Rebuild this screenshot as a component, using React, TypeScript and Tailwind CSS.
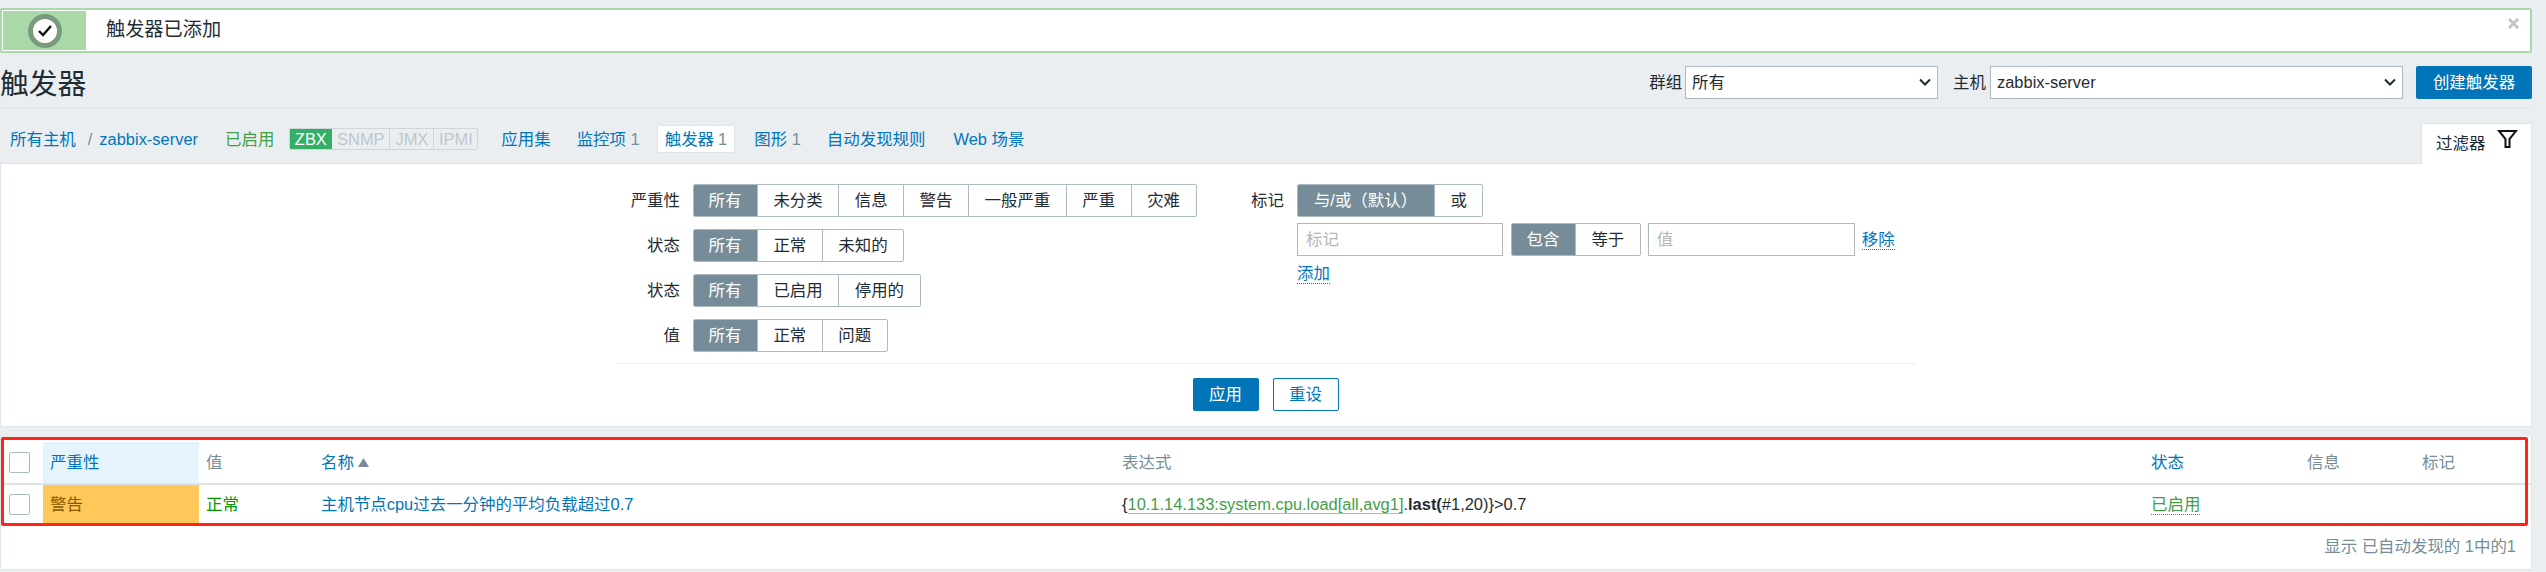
const fontStack = "font-['Liberation_Sans','Noto_Sans_CJK_SC',sans-serif]";

function Segmented({ options, first }: { options: string[]; first?: string }) {
  return (
    <div className="flex h-[33px] w-fit rounded-[2px] border border-[#acbbc2] overflow-hidden">
      {options.map((label, index) => (
        <div
          key={label}
          className={
            index === 0
              ? `flex items-center justify-center -ml-px -my-px px-[15.5px] bg-[#768d99] text-white ${first ?? ''}`
              : 'flex items-center justify-center px-[15.5px] border-l border-[#acbbc2]'
          }
        >
          {label}
        </div>
      ))}
    </div>
  );
}

function FilterRow({ label, options }: { label: string; options: string[] }) {
  return (
    <div className="flex items-center h-[33px]">
      <div className="w-[64px] mr-[13px] text-right">{label}</div>
      <Segmented options={options} />
    </div>
  );
}

function Chevron() {
  return (
    <svg className="absolute right-[7px] top-[12px] pointer-events-none" width="12" height="9" viewBox="0 0 12 9" fill="none">
      <path d="M1 1.5l5 5 5-5" stroke="#1f2c33" strokeWidth="2" />
    </svg>
  );
}

function HostSelect({ value, width }: { value: string; width: string }) {
  return (
    <div className={`relative h-[33px] ${width}`}>
      <select className="appearance-none w-full h-full bg-white border border-[#acbbc2] pl-[6px] outline-none">
        <option>{value}</option>
      </select>
      <Chevron />
    </div>
  );
}

export default function App() {
  return (
    <div className={`${fontStack} w-full h-[572px] overflow-hidden bg-[#ebeef0] text-[16.44px] text-[#1f2c33] pr-[14px] pt-2`}>
      {/* メッセージ */}
      <div className="relative flex h-[45px] bg-white border-2 border-[#a9d8a9] rounded-[2px] p-px">
        <div className="flex items-center justify-center w-[83px] bg-[#a9d8a9]">
          <div className="flex items-center justify-center w-[34px] h-[34px] rounded-full bg-white border-[5px] border-[#7a9a7c]">
            <svg width="16" height="14" viewBox="0 0 16 14" fill="none">
              <path d="M2 7l4 4 8-9" stroke="#111" strokeWidth="2.4" />
            </svg>
          </div>
        </div>
        <div className="flex items-center pl-[20px] text-[19.2px]">触发器已添加</div>
        <svg className="absolute right-[11px] top-[8px]" width="11" height="11" viewBox="0 0 11 11" fill="none">
          <path d="M1 1l9 9M10 1l-9 9" stroke="#bcc8ce" strokeWidth="3" />
        </svg>
      </div>

      {/* ヘッダー */}
      <div className="flex items-center justify-between h-[56px] border-b border-[#dfe4e7]">
        <h1 className="text-[28.8px] font-normal leading-none mt-[8px]">触发器</h1>
        <div className="flex items-center mt-[4px]">
          <span className="mr-[3px]">群组</span>
          <HostSelect value="所有" width="w-[253px]" />
          <span className="ml-[15px] mr-[4px]">主机</span>
          <HostSelect value="zabbix-server" width="w-[413px]" />
          <button className="ml-[13px] w-[116px] h-[33px] rounded-[2px] bg-[#0275b8] text-white">创建触发器</button>
        </div>
      </div>

      {/* ナビ */}
      <div className="flex items-end justify-between h-[54px]">
        <div className="flex items-center h-[28px] mb-[10px] pl-[10px] text-[#0275b8]">
          <span>所有主机</span>
          <span className="ml-[12px] text-[#768d99]">/</span>
          <span className="ml-[7px]">zabbix-server</span>
          <span className="ml-[27px] text-[#429e47]">已启用</span>
          <div className="flex h-[22px] ml-[15px] rounded-[2px] border border-[#cfd6da] overflow-hidden text-[#bcc7cd] leading-[20px]">
            <span className="-my-px -ml-px w-[43px] text-center leading-[22px] bg-[#34af67] text-white">ZBX</span>
            <span className="w-[57px] text-center">SNMP</span>
            <span className="w-[44px] text-center border-l border-[#cfd6da]">JMX</span>
            <span className="w-[44px] text-center border-l border-[#cfd6da]">IPMI</span>
          </div>
          <span className="ml-[23px]">应用集</span>
          <span className="ml-[26px]">监控项 <span className="text-[#768d99]">1</span></span>
          <span className="ml-[17px] flex items-center h-[28px] pl-[7px] pr-[7px] bg-white border border-[#dfe4e7] rounded-[2px]">触发器 <span className="ml-1 text-[#768d99]">1</span></span>
          <span className="ml-[19px]">图形 <span className="text-[#768d99]">1</span></span>
          <span className="ml-[26px]">自动发现规则</span>
          <span className="ml-[28px]">Web 场景</span>
        </div>
        <div className="flex items-start justify-between w-[111px] h-[41px] -mb-px pl-[14px] pr-[13px] pt-[5px] bg-white rounded-t-[2px] border-t border-x border-[#dfe4e7] z-10">
          <span className="mt-[2px]">过滤器</span>
          <svg width="21" height="20" viewBox="0 0 21 20" fill="none">
            <path d="M2 2h17l-6.500 8v8h-4v-8z" stroke="#111" strokeWidth="2" />
          </svg>
        </div>
      </div>

      {/* フィルター */}
      <div className="h-[264px] bg-white border border-[#dfe4e7] pt-[20px]">
        <div className="w-[1300px] mx-auto">
          <div className="flex h-[180px] border-b border-[#ebeef0]">
            <div className="w-[635px] flex flex-col gap-[12px]">
              <FilterRow label="严重性" options={['所有', '未分类', '信息', '警告', '一般严重', '严重', '灾难']} />
              <FilterRow label="状态" options={['所有', '正常', '未知的']} />
              <FilterRow label="状态" options={['所有', '已启用', '停用的']} />
              <FilterRow label="值" options={['所有', '正常', '问题']} />
            </div>
            <div className="flex items-start">
              <div className="w-[34px] mr-[12px] leading-[33px]">标记</div>
              <div>
                <Segmented options={['与/或（默认）', '或']} first="w-[137px]" />
                <div className="flex items-center mt-[6px] h-[33px]">
                  <input placeholder="标记" className="w-[206px] h-[33px] border border-[#acbbc2] px-[8px] placeholder:text-[#b5b5b5] outline-none" />
                  <div className="ml-[8px]">
                    <Segmented options={['包含', '等于']} />
                  </div>
                  <input placeholder="值" className="ml-[7px] w-[207px] h-[33px] border border-[#acbbc2] px-[8px] placeholder:text-[#b5b5b5] outline-none" />
                  <span className="ml-[7px] text-[#0275b8] border-b border-dotted border-[#0275b8] leading-[20px]">移除</span>
                </div>
                <span className="inline-block mt-[7px] text-[#0275b8] border-b border-dotted border-[#0275b8] leading-[20px]">添加</span>
              </div>
            </div>
          </div>
          <div className="flex justify-center gap-[14px] mt-[14px] pr-px">
            <button className="w-[66px] h-[33px] rounded-[2px] bg-[#0275b8] text-white">应用</button>
            <button className="w-[66px] h-[33px] rounded-[2px] bg-white border border-[#0275b8] text-[#0275b8]">重设</button>
          </div>
        </div>
      </div>

      {/* テーブル */}
      <div className="relative mt-[10px] h-[133px] bg-white border-x border-b border-[#dfe4e7] pt-[5px]">
        <table className="w-full table-fixed">
          <colgroup>
            <col className="w-[42px]" />
            <col className="w-[156px]" />
            <col className="w-[115px]" />
            <col className="w-[801px]" />
            <col className="w-[1029px]" />
            <col className="w-[156px]" />
            <col className="w-[115px]" />
            <col className="w-[116px]" />
          </colgroup>
          <thead>
            <tr className="h-[42px] border-b-2 border-[#dfe4e7] text-left text-[#768d99]">
              <th className="pl-[8px] font-normal">
                <input type="checkbox" className="block appearance-none w-[21px] h-[21px] border border-[#acbbc2] rounded-[2px]" />
              </th>
              <th className="pl-[7px] font-normal bg-[#e5f3fd] text-[#0275b8]">严重性</th>
              <th className="pl-[7px] font-normal">值</th>
              <th className="pl-[7px] font-normal text-[#0275b8]">
                <span className="inline-flex items-center gap-[4px]">
                  名称
                  <svg width="11" height="9" viewBox="0 0 11 9">
                    <path d="M5.500 0l5.500 9H0z" fill="#768d99" />
                  </svg>
                </span>
              </th>
              <th className="pl-[7px] font-normal">表达式</th>
              <th className="pl-[7px] font-normal text-[#0275b8]">状态</th>
              <th className="pl-[7px] font-normal">信息</th>
              <th className="pl-[7px] font-normal">标记</th>
            </tr>
          </thead>
          <tbody>
            <tr className="h-[39px]">
              <td className="pl-[8px]">
                <input type="checkbox" className="block appearance-none w-[21px] h-[21px] border border-[#acbbc2] rounded-[2px]" />
              </td>
              <td className="pl-[7px] bg-[#ffc859] text-[#8a5a00]">警告</td>
              <td className="pl-[7px] text-[#009900]">正常</td>
              <td className="pl-[7px] text-[#0275b8]">主机节点cpu过去一分钟的平均负载超过0.7</td>
              <td className="pl-[7px]">
                {'{'}
                <span className="text-[#429e47] border-b border-[#acbbc2]">10.1.14.133:system.cpu.load[all,avg1]</span>
                .<b>last(</b>#1,20)
                {'}'}&gt;0.7
              </td>
              <td className="pl-[7px]">
                <span className="text-[#429e47] border-b border-dotted border-[#429e47] leading-[20px] inline-block">已启用</span>
              </td>
              <td />
              <td />
            </tr>
          </tbody>
        </table>
        <div className="flex items-center justify-end h-[46px] pr-[15px] text-[#768d99]">显示 已自动发现的 1中的1</div>
        {/* 赤枠 */}
        <div className="absolute left-0 right-[3px] top-0 h-[89px] border-[3px] border-[#ff2517] rounded-[2px] pointer-events-none" />
      </div>
    </div>
  );
}
